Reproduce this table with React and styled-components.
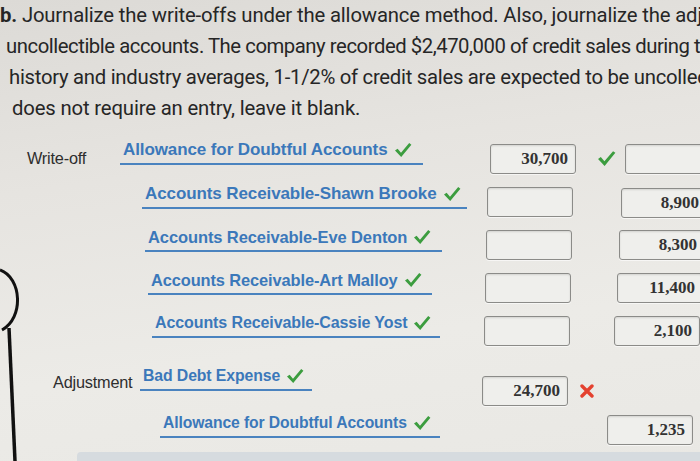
import React from "react";
import styled, { createGlobalStyle } from "styled-components";

const Global = createGlobalStyle`
  html, body { margin: 0; padding: 0; }
  body {
    width: 700px;
    height: 461px;
    overflow: hidden;
    background: linear-gradient(172deg, #dcdad6 0%, #e6e4e0 35%, #ecebe7 70%, #e9e8e4 100%);
  }
`;

const Page = styled.div`
  position: relative;
  width: 700px;
  height: 461px;
  overflow: hidden;
  font-family: "Liberation Sans", Arial, sans-serif;
`;

const Prompt = styled.div`
  font-family: Roboto, "Liberation Sans", sans-serif;
  font-size: 20.3px;
  line-height: 31px;
  color: #262626;
`;

const PromptLine = styled.div`
  white-space: nowrap;
  overflow: hidden;
  padding-left: ${(p) => p.$indent}px;
  letter-spacing: ${(p) => p.$ls}px;
  & b { font-weight: 700; }
`;

const Journal = styled.div`
  margin-top: 13px;
  display: flex;
  flex-direction: column;
`;

const Row = styled.div`
  display: grid;
  grid-template-columns: ${(p) => p.$dx}px 86px ${(p) => p.$gap}px 86px;
  align-items: center;
  height: 43px;
  margin-top: ${(p) => p.$mt || 0}px;
`;

const Lead = styled.div`
  display: flex;
  align-items: center;
  padding-left: ${(p) => p.$lx}px;
  height: 100%;
`;

const Label = styled.div`
  width: ${(p) => p.$w}px;
  flex: none;
  font-size: 16.3px;
  color: #2e2e2e;
  margin-bottom: ${(p) => p.$mb}px;
  letter-spacing: -0.2px;
`;

const Account = styled.div`
  box-sizing: border-box;
  min-width: ${(p) => p.$w}px;
  flex: none;
  display: flex;
  align-items: center;
  gap: 6px;
  padding: 0 0 3px 3px;
  border-bottom: 2px solid #4a83bf;
  margin-bottom: ${(p) => p.$mb}px;
  font-weight: 700;
  font-size: ${(p) => p.$fs}px;
  line-height: 20px;
  color: #3b78ba;
  white-space: nowrap;
  letter-spacing: -0.1px;
  & svg { flex: none; }
`;

const Box = styled.div`
  box-sizing: border-box;
  height: 30px;
  width: 86px;
  border: 1px solid #8b8b88;
  border-radius: 3px;
  background: #efefec;
  box-shadow: inset 0 1px 2px rgba(0, 0, 0, 0.12), 0 1px 0 rgba(255, 255, 255, 0.6);
  display: flex;
  align-items: center;
  justify-content: flex-end;
  padding-right: 7px;
  font-family: "Liberation Serif", "Times New Roman", serif;
  font-weight: 700;
  font-size: 17px;
  color: #333;
  margin-top: ${(p) => p.$mt || 0}px;
`;

const MarkCell = styled.div`
  display: flex;
  align-items: center;
  padding-left: ${(p) => p.$pl}px;
`;

const Empty = styled.div``;

const BottomBar = styled.div`
  position: absolute;
  left: 77px;
  right: 0;
  bottom: 0;
  height: 9px;
  background: #d6dbdf;
  border-top-left-radius: 4px;
`;

const Edge = styled.svg`
  position: absolute;
  left: 0;
  top: 260px;
`;

const Check = ({ size = 18 }) => (
  <svg width={size} height={size * 0.9} viewBox="0 0 18 16">
    <path d="M1 8.5 L3.6 6.6 L7 10.6 L15.2 1 L17.4 2.6 L7.2 15 Z" fill="#3c9d3f" />
  </svg>
);

const Cross = () => (
  <svg width="14" height="14" viewBox="0 0 14 14">
    <path d="M2 2 L12 12 M12 2 L2 12" stroke="#e4412f" strokeWidth="3.4" strokeLinecap="round" />
  </svg>
);

const rows = [
  { label: "Write-off", lx: 27, lw: 93, lmb: 0, acct: "Allowance for Doubtful Accounts", fs: 17, ax: 120, w: 303, amb: 12, dx: 490, gap: 49, debit: "30,700", mark: "check", markPl: 21, credit: "" },
  { acct: "Accounts Receivable-Shawn Brooke", fs: 17, ax: 142, w: 325, amb: 10, dx: 487, gap: 48, debit: "", credit: "8,900", cmt: 2 },
  { acct: "Accounts Receivable-Eve Denton", fs: 16.5, ax: 145, w: 297, amb: 10, dx: 486, gap: 47, debit: "", credit: "8,300" },
  { acct: "Accounts Receivable-Art Malloy", fs: 16.4, ax: 148, w: 284, amb: 10, dx: 485, gap: 46, debit: "", credit: "11,400" },
  { acct: "Accounts Receivable-Cassie Yost", fs: 16, ax: 152, w: 288, amb: 10, dx: 484, gap: 44, debit: "", credit: "2,100" },
  { label: "Adjustment", lx: 53, lw: 87, lmb: 16, acct: "Bad Debt Expense", fs: 15.8, ax: 140, w: 172, amb: 24, dx: 482, gap: 40, debit: "24,700", mark: "cross", markPl: 12, credit: null, mt: 14 },
  { acct: "Allowance for Doubtful Accounts", fs: 15.7, ax: 160, w: 280, amb: 10, dx: 521, gap: 0, debit: null, credit: "1,235", cmt: -2 },
];

export default function App() {
  return (
    <Page>
      <Global />
      <Prompt>
        <PromptLine $indent={0} $ls={-0.15}>
          <b>b.</b> Journalize the write-offs under the allowance method. Also, journalize the adju
        </PromptLine>
        <PromptLine $indent={6} $ls={-0.45}>
          uncollectible accounts. The company recorded $2,470,000 of credit sales during th
        </PromptLine>
        <PromptLine $indent={9} $ls={-0.27}>
          history and industry averages, 1-1/2% of credit sales are expected to be uncollect
        </PromptLine>
        <PromptLine $indent={12} $ls={-0.15}>does not require an entry, leave it blank.</PromptLine>
      </Prompt>

      <Journal>
        {rows.map((r, i) => (
          <Row key={i} $dx={r.dx} $gap={r.gap} $mt={r.mt}>
            <Lead $lx={r.label ? r.lx : r.ax}>
              {r.label && (
                <Label $w={r.lw} $mb={r.lmb}>
                  {r.label}
                </Label>
              )}
              <Account $w={r.w} $mb={r.amb} $fs={r.fs}>
                <span>{r.acct}</span>
                <Check />
              </Account>
            </Lead>
            {r.debit === null ? <Empty /> : <Box>{r.debit}</Box>}
            <MarkCell $pl={r.markPl || 0}>
              {r.mark === "check" && <Check size={19} />}
              {r.mark === "cross" && <Cross />}
            </MarkCell>
            {r.credit === null ? <Empty /> : <Box $mt={r.cmt}>{r.credit}</Box>}
          </Row>
        ))}
      </Journal>

      <BottomBar />
      <Edge width="24" height="201" viewBox="0 0 24 201">
        <path d="M0 10 C 22 18, 24 58, 2 70" stroke="#111" strokeWidth="3" fill="none" />
        <path d="M9 68 L15 201" stroke="#111" strokeWidth="3.5" fill="none" />
      </Edge>
    </Page>
  );
}
